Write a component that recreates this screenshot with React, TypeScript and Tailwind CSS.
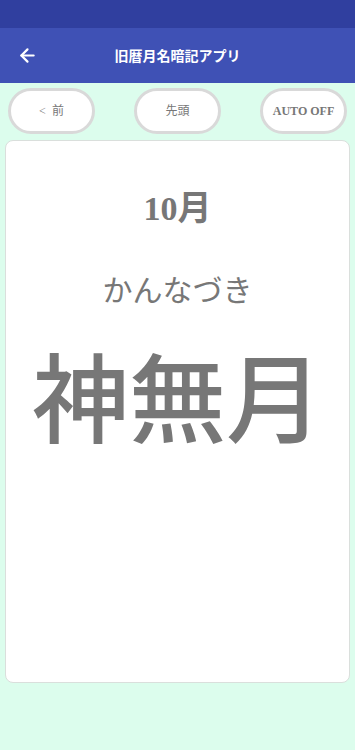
import { ArrowLeft } from "lucide-react";

const serif = "font-['Liberation_Serif','Noto_Sans_CJK_JP',serif]";

const PillButton = ({ label, bold }: { label: string; bold?: boolean }) => (
  <button
    className={`${serif} flex h-[46px] w-[87px] items-center justify-center whitespace-pre rounded-[23px] border-[3px] border-[#d9d9d9] bg-white text-[12px] text-[#777777] ${bold ? "font-bold" : ""}`}
  >
    {label}
  </button>
);

const App = () => {
  return (
    <div className="flex min-h-[750px] w-full flex-col bg-[#dcfded] font-['Noto_Sans_CJK_JP',sans-serif]">
      <div className="h-[28px] bg-[#303f9f]" />
      <div className="relative flex h-[55px] items-center justify-center bg-[#3f51b5]">
        <ArrowLeft className="absolute left-[17px] text-white" size={21} strokeWidth={2.5} />
        <h1 className="text-[14px] font-bold text-white">旧暦月名暗記アプリ</h1>
      </div>

      <div className="flex justify-between px-2 pt-[5px]">
        <PillButton label="<  前" />
        <PillButton label="先頭" />
        <PillButton label="AUTO OFF" bold />
      </div>

      <div className="mx-[5px] mt-[6px] flex h-[543px] flex-col items-center rounded-[8px] border border-[#dadfdc] bg-white text-[#777777]">
        <p className={`${serif} mt-[51px] text-[34px] font-bold leading-none`}>10月</p>
        <p className="mt-[47px] text-[30px] leading-none">かんなづき</p>
        <p className="mt-[41px] text-[97px] font-medium leading-none">神無月</p>
      </div>
    </div>
  );
};

export default App;
